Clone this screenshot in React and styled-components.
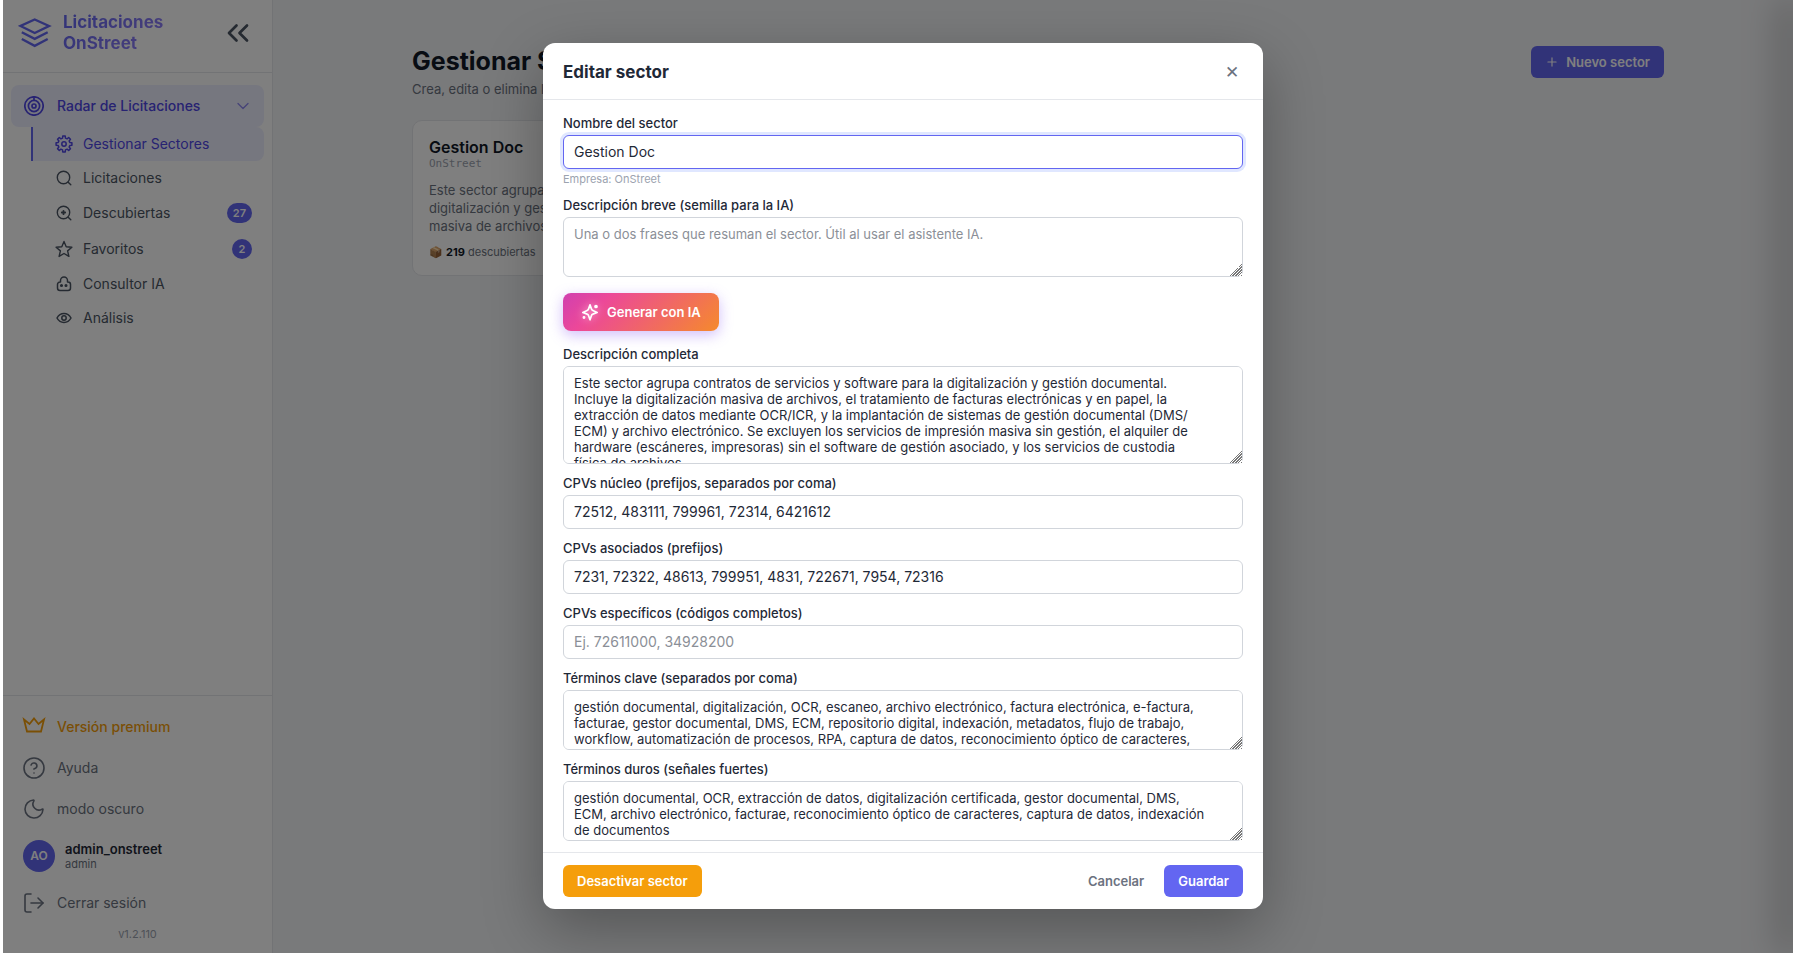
import React from "react";
import styled, { createGlobalStyle, css } from "styled-components";
import { ChevronsLeft, ChevronDown, CircleHelp, Moon, LogOut, Plus } from "lucide-react";

const GlobalStyle = createGlobalStyle`
  *, *::before, *::after { box-sizing: border-box; }
  body {
    margin: 0;
    background: #fff;
    color: #1f2937;
    font-family: Inter, "Liberation Sans", sans-serif;
    font-size: 14px;
  }
  button, input, textarea { font-family: inherit; }
  h1, h2, h3, p { margin: 0; }
  svg { flex: none; }
`;

const Viewport = styled.div`
  height: 100vh;
  padding-left: 3px;
  overflow: hidden;
`;

const Shell = styled.div`
  position: relative;
  display: flex;
  width: calc(100% + 10px);
  height: 100%;
  background: #f3f4f6;
`;

/* Sidebar */

const Sidebar = styled.aside`
  display: flex;
  flex-direction: column;
  flex: 0 0 270px;
  background: #fff;
  border-right: 1px solid #e5e7eb;
`;

const Brand = styled.header`
  display: flex;
  align-items: center;
  gap: 11px;
  height: 73px;
  padding: 0 16px 6px 15px;
  border-bottom: 1px solid #e5e7eb;
`;

const BrandName = styled.span`
  flex: 1;
  font-size: 17px;
  font-weight: 700;
  line-height: 21px;
  color: transparent;
  background: linear-gradient(135deg, #6366f1, #a78bfa);
  background-clip: text;
`;

const IconButton = styled.button`
  display: flex;
  align-items: center;
  justify-content: center;
  padding: 0;
  border: 0;
  background: none;
  color: ${(p) => p.$color || "#4b5563"};
`;

const Nav = styled.nav`
  flex: 1;
  padding: 12px 8px;
`;

const NavGroup = styled.button`
  display: flex;
  align-items: center;
  gap: 13px;
  width: 100%;
  height: 42px;
  padding: 0 11px 1px 13px;
  border: 0;
  border-radius: 8px;
  background: #edeeff;
  color: #4f46e5;
  font-size: 14px;
  font-weight: 500;
  text-align: left;
`;

const Grow = styled.span`
  flex: 1;
`;

const SubMenu = styled.ul`
  margin: 0;
  padding: 0 0 0 20px;
  list-style: none;
`;

const SubLink = styled.a`
  display: flex;
  align-items: center;
  gap: 10px;
  min-height: 34px;
  padding: 8px 12px 8px 22px;
  border-left: 2px solid transparent;
  border-radius: 0 8px 8px 0;
  color: #4b5563;
  font-size: 14px;
  line-height: 18px;
  text-decoration: none;
  ${(p) =>
    p.$active &&
    css`
      border-left-color: #6366f1;
      background: #edeeff;
      color: #4f46e5;
    `}
`;

const Badge = styled.span`
  min-width: 20px;
  padding: 0 6px;
  border-radius: 10px;
  background: #6366f1;
  color: #fff;
  font-size: 11px;
  font-weight: 600;
  line-height: 20px;
  text-align: center;
`;

const SideFooter = styled.footer`
  padding: 10px 8px;
  border-top: 1px solid #e5e7eb;
`;

const FooterButton = styled.button`
  display: flex;
  align-items: center;
  gap: 11px;
  width: 100%;
  height: 41px;
  padding: 0 11px;
  border: 0;
  background: none;
  color: ${(p) => (p.$premium ? "#f59e0b" : "#6b7280")};
  font-size: 14px;
  font-weight: ${(p) => (p.$premium ? 500 : 400)};
`;

const User = styled.div`
  display: flex;
  align-items: center;
  gap: 10px;
  height: 53px;
  padding: 0 12px;
`;

const Avatar = styled.span`
  width: 32px;
  border-radius: 50%;
  background: #6366f1;
  color: #fff;
  font-size: 12px;
  font-weight: 600;
  line-height: 32px;
  text-align: center;
`;

const UserText = styled.span`
  display: flex;
  flex-direction: column;
  color: #6b7280;
  font-size: 11px;
  line-height: 14px;
`;

const UserName = styled.strong`
  color: #1f2937;
  font-size: 13px;
  font-weight: 600;
  line-height: 16px;
`;

const Version = styled.p`
  padding-top: 2px;
  color: #9ca3af;
  font-size: 11px;
  line-height: 18px;
  text-align: center;
`;

/* Page */

const Main = styled.main`
  flex: 1;
  min-width: 0;
`;

const Container = styled.div`
  max-width: 1300px;
  margin: 0 auto;
  padding: 46px 24px;
`;

const PageHead = styled.header`
  display: flex;
  align-items: flex-start;
  justify-content: space-between;
  margin-bottom: 22px;
`;

const PageTitle = styled.h1`
  color: #111827;
  font-size: 25px;
  font-weight: 700;
  line-height: 30px;
`;

const PageText = styled.p`
  margin-top: 4px;
  color: #6b7280;
  font-size: 13px;
  line-height: 18px;
`;

const Cards = styled.div`
  display: grid;
  grid-template-columns: repeat(3, 1fr);
  gap: 16px;
`;

const Card = styled.article`
  padding: 16px;
  border: 1px solid #e5e7eb;
  border-radius: 10px;
  background: #fff;
`;

const CardTitle = styled.h2`
  color: #111827;
  font-size: 16px;
  font-weight: 600;
  line-height: 20px;
`;

const CardCompany = styled.p`
  color: #9ca3af;
  font-family: "DejaVu Sans Mono", "Liberation Mono", monospace;
  font-size: 11px;
  line-height: 14px;
`;

const CardText = styled.p`
  display: -webkit-box;
  margin: 10px 0;
  overflow: hidden;
  color: #6b7280;
  font-size: 13px;
  line-height: 18px;
  -webkit-line-clamp: 3;
  -webkit-box-orient: vertical;
`;

const CardStats = styled.p`
  color: #6b7280;
  font-size: 11px;
  line-height: 14px;

  strong { color: #111827; }
`;

const Button = styled.button`
  display: flex;
  align-items: center;
  gap: 7px;
  height: 32px;
  padding: 0 14px;
  border: 0;
  border-radius: 6px;
  background: ${(p) => p.$bg || "#6366f1"};
  color: ${(p) => p.$color || "#fff"};
  font-size: 13px;
  font-weight: 600;
  white-space: nowrap;
`;

const DrawerEdge = styled.div`
  position: absolute;
  top: 0;
  right: 0;
  bottom: 0;
  width: 10px;
  box-shadow: -8px 0 36px rgba(0, 0, 0, 0.5);
`;

/* Dialog */

const Overlay = styled.div`
  position: absolute;
  inset: 0;
  display: flex;
  align-items: flex-start;
  justify-content: center;
  padding: 43px 20px;
  background: rgba(0, 0, 0, 0.5);
`;

const Dialog = styled.section`
  width: 100%;
  max-width: 720px;
  border-radius: 12px;
  background: #fff;
  box-shadow: 0 20px 60px rgba(0, 0, 0, 0.3);
`;

const DialogHead = styled.header`
  display: flex;
  align-items: center;
  justify-content: space-between;
  height: 57px;
  padding: 2px 20px 0;
  border-bottom: 1px solid #e5e7eb;
`;

const DialogTitle = styled.h2`
  font-size: 17px;
  font-weight: 700;
`;

const CloseButton = styled(IconButton)`
  width: 22px;
  height: 22px;
  font-size: 17px;
`;

const Form = styled.form`
  display: flex;
  flex-direction: column;
  gap: 12px;
  padding: 16px 20px 11px;
`;

const Field = styled.div`
  display: flex;
  flex-direction: column;
  gap: 4px;
`;

const Label = styled.label`
  color: #1f2937;
  font-size: 13px;
  font-weight: 500;
  line-height: 15px;
`;

const control = css`
  width: 100%;
  border: 1px solid #d1d5db;
  border-radius: 6px;
  outline: 0;
  background: #fff;
  color: #1f2937;
  line-height: 16px;

  &::placeholder { color: #8b8f97; }
`;

const TextInput = styled.input`
  ${control}
  height: 34px;
  padding: 7px 10px 9px;
  font-size: 14px;

  &:focus {
    border-color: #6366f1;
    box-shadow: 0 0 0 3px #e0e7ff;
  }
`;

const TextArea = styled.textarea`
  ${control}
  display: block;
  height: ${(p) => (p.$tall ? 98 : 60)}px;
  padding: 8px 10px;
  font-size: 13px;
  resize: vertical;
  scrollbar-width: none;

  &::-webkit-resizer {
    background:
      linear-gradient(135deg, #fff 60%, transparent 60%),
      repeating-linear-gradient(135deg, #777 0 1px, #fff 1px 2px);
  }
`;

const Hint = styled.small`
  color: #9ca3af;
  font-size: 11px;
  line-height: 13px;
`;

const GenerateButton = styled.button`
  display: flex;
  align-items: center;
  align-self: flex-start;
  gap: 8px;
  height: 38px;
  margin: 4px 0;
  padding: 0 18px;
  border: 0;
  border-radius: 8px;
  background: linear-gradient(135deg, #d040b0 0%, #ec4899 25%, #f58a2c 100%);
  box-shadow: 0 4px 14px rgba(139, 92, 246, 0.4);
  color: #fff;
  font-size: 13px;
  font-weight: 600;

  svg { filter: drop-shadow(0 0 4px rgba(255, 255, 255, 0.6)); }
`;

const DialogFoot = styled.footer`
  display: flex;
  align-items: center;
  gap: 6px;
  padding: 12px 20px;
  border-top: 1px solid #e5e7eb;
`;

/* Icons */

const Icon = styled.svg.attrs((p) => ({
  width: p.$size,
  height: p.$size,
  viewBox: `0 0 ${p.$size} ${p.$size}`,
  "aria-hidden": true,
}))`
  fill: none;
  stroke: currentColor;
  stroke-width: ${(p) => p.$weight || 1.5};
`;

const LayersIcon = () => (
  <Icon $size={34} $weight={2.4} color="#6366f1">
    <path d="M16.700 3.500L31 10 16.700 17 2.500 10z" />
    <path d="M3.800 16.200l12.900 6.600 13-6.600M3.800 23l12.900 6.800L29.700 23" />
  </Icon>
);

const RadarIcon = () => (
  <Icon $size={20} $weight={1.7}>
    <circle cx="10" cy="10" r="9.200" />
    <circle cx="10" cy="10" r="5.600" />
    <circle cx="10" cy="10" r="2" />
    <path d="M10 1v3.500" />
  </Icon>
);

const GEAR = Array.from({ length: 8 }, (_, i) =>
  [[-14, 6], [-9, 8], [9, 8], [14, 6]].map(([offset, radius]) => {
    const angle = ((i * 45 + offset) * Math.PI) / 180;
    return `${(9 + radius * Math.cos(angle)).toFixed(2)},${(9 + radius * Math.sin(angle)).toFixed(2)}`;
  })
).flat().join(" ");

const GearIcon = () => (
  <Icon $size={18} strokeLinejoin="round">
    <polygon points={GEAR} />
    <circle cx="9" cy="9" r="2.200" />
  </Icon>
);

const SearchIcon = ({ plus }) => (
  <Icon $size={16} $weight={1.4} strokeLinecap="round">
    <circle cx="7.500" cy="7.500" r="6.200" />
    <path d="M12.200 12.200l2.600 2.600" />
    {plus && <path strokeWidth="1.800" d="M7.500 5.800v3.400M5.800 7.500h3.400" />}
  </Icon>
);

const StarIcon = () => (
  <Icon $size={18} $weight={1.4} strokeLinejoin="round">
    <path d="M9 1.500l2.200 5.200 5.700.5-4.300 3.700 1.300 5.500L9 13.500l-4.900 2.900 1.300-5.500L1.100 7.200l5.700-.5z" />
  </Icon>
);

const BotIcon = () => (
  <Icon $size={16} strokeLinejoin="round">
    <path d="M4.500 6V4.500a3.500 3.500 0 0 1 7 0V6h.5a2.500 2.500 0 0 1 2.500 2.500V12a2.500 2.500 0 0 1-2.500 2.500H4A2.500 2.500 0 0 1 1.500 12V8.500A2.500 2.500 0 0 1 4 6z" />
    <circle cx="5.500" cy="9.500" r="0.800" fill="currentColor" />
    <circle cx="10" cy="9.500" r="0.800" fill="currentColor" />
  </Icon>
);

const EyeIcon = () => (
  <Icon $size={16}>
    <path d="M1 8c1.600-3 4-4.500 7-4.500S13.400 5 15 8c-1.600 3-4 4.500-7 4.500S2.600 11 1 8z" />
    <circle cx="8" cy="8" r="2.200" />
  </Icon>
);

const CrownIcon = () => (
  <Icon $size={24} $weight={1.8}>
    <path d="M2 4.500L7.500 9 12 3.500 16.500 9 22 4.500 19 16.500H5z" />
  </Icon>
);

const SparkIcon = () => (
  <Icon $size={18} $weight={1.7} strokeLinejoin="round">
    <path d="M9 1.800l1.500 4.300a2 2 0 0 0 1.300 1.300L16.200 9.500l-4.400 1.600a2 2 0 0 0-1.300 1.300L9 16.800l-1.500-4.400a2 2 0 0 0-1.300-1.300L1.800 9.500l4.400-2.100a2 2 0 0 0 1.300-1.300z" />
    <circle cx="15" cy="3.500" r="1" fill="currentColor" />
    <circle cx="3" cy="14.500" r="0.600" fill="currentColor" />
  </Icon>
);

const IconSlot = styled.span`
  display: flex;
  justify-content: center;
  width: 18px;
`;

const MENU = [
  { label: "Gestionar Sectores", icon: <GearIcon />, active: true },
  { label: "Licitaciones", icon: <SearchIcon /> },
  { label: "Descubiertas", icon: <SearchIcon plus />, badge: 27 },
  { label: "Favoritos", icon: <StarIcon />, badge: 2 },
  { label: "Consultor IA", icon: <BotIcon /> },
  { label: "Análisis", icon: <EyeIcon /> },
];

const DESCRIPTION = [
  "Este sector agrupa contratos de servicios y software para la digitalización y gestión documental.",
  "Incluye la digitalización masiva de archivos, el tratamiento de facturas electrónicas y en papel, la",
  "extracción de datos mediante OCR/ICR, y la implantación de sistemas de gestión documental (DMS/",
  "ECM) y archivo electrónico. Se excluyen los servicios de impresión masiva sin gestión, el alquiler de",
  "hardware (escáneres, impresoras) sin el software de gestión asociado, y los servicios de custodia",
  "física de archivos.",
].join("\n");

const KEY_TERMS = [
  "gestión documental, digitalización, OCR, escaneo, archivo electrónico, factura electrónica, e-factura,",
  "facturae, gestor documental, DMS, ECM, repositorio digital, indexación, metadatos, flujo de trabajo,",
  "workflow, automatización de procesos, RPA, captura de datos, reconocimiento óptico de caracteres,",
].join("\n");

const HARD_TERMS = [
  "gestión documental, OCR, extracción de datos, digitalización certificada, gestor documental, DMS,",
  "ECM, archivo electrónico, facturae, reconocimiento óptico de caracteres, captura de datos, indexación",
  "de documentos",
].join("\n");

const FieldRow = ({ id, label, hint, children }) => (
  <Field>
    <Label htmlFor={id}>{label}</Label>
    {children}
    {hint && <Hint>{hint}</Hint>}
  </Field>
);

export default function App() {
  return (
    <Viewport>
      <GlobalStyle />
      <Shell>
        <Sidebar>
          <Brand>
            <LayersIcon />
            <BrandName>Licitaciones OnStreet</BrandName>
            <IconButton aria-label="Contraer menú"><ChevronsLeft size={36} strokeWidth={1.8} /></IconButton>
          </Brand>
          <Nav>
            <NavGroup>
              <RadarIcon />
              <Grow>Radar de Licitaciones</Grow>
              <ChevronDown size={20} strokeWidth={1.6} opacity={0.6} />
            </NavGroup>
            <SubMenu>
              {MENU.map((m) => (
                <li key={m.label}>
                  <SubLink href="#" $active={m.active}>
                    <IconSlot>{m.icon}</IconSlot>
                    <Grow>{m.label}</Grow>
                    {m.badge && <Badge>{m.badge}</Badge>}
                  </SubLink>
                </li>
              ))}
            </SubMenu>
          </Nav>
          <SideFooter>
            <FooterButton $premium><CrownIcon />Versión premium</FooterButton>
            <FooterButton><CircleHelp size={24} strokeWidth={1.6} />Ayuda</FooterButton>
            <FooterButton><Moon size={24} strokeWidth={1.6} />modo oscuro</FooterButton>
            <User>
              <Avatar>AO</Avatar>
              <UserText><UserName>admin_onstreet</UserName>admin</UserText>
            </User>
            <FooterButton><LogOut size={24} strokeWidth={1.6} />Cerrar sesión</FooterButton>
            <Version>v1.2.110</Version>
          </SideFooter>
        </Sidebar>

        <Main>
          <Container>
            <PageHead>
              <div>
                <PageTitle>Gestionar Sectores</PageTitle>
                <PageText>Crea, edita o elimina los sectores de tu empresa.</PageText>
              </div>
              <Button><Plus size={14} />Nuevo sector</Button>
            </PageHead>
            <Cards>
              <Card>
                <CardTitle>Gestion Doc</CardTitle>
                <CardCompany>OnStreet</CardCompany>
                <CardText>{DESCRIPTION}</CardText>
                <CardStats>📦 <strong>219</strong> descubiertas</CardStats>
              </Card>
            </Cards>
          </Container>
        </Main>
        <DrawerEdge />

        <Overlay>
          <Dialog role="dialog" aria-modal="true" aria-labelledby="dialog-title">
            <DialogHead>
              <DialogTitle id="dialog-title">Editar sector</DialogTitle>
              <CloseButton $color="#6b7280" aria-label="Cerrar">✕</CloseButton>
            </DialogHead>
            <Form id="sector-form">
              <FieldRow id="nombre" label="Nombre del sector" hint="Empresa: OnStreet">
                <TextInput id="nombre" defaultValue="Gestion Doc" autoFocus />
              </FieldRow>
              <FieldRow id="breve" label="Descripción breve (semilla para la IA)">
                <TextArea id="breve" placeholder="Una o dos frases que resuman el sector. Útil al usar el asistente IA." />
              </FieldRow>
              <GenerateButton type="button"><SparkIcon />Generar con IA</GenerateButton>
              <FieldRow id="completa" label="Descripción completa">
                <TextArea id="completa" $tall defaultValue={DESCRIPTION} />
              </FieldRow>
              <FieldRow id="nucleo" label="CPVs núcleo (prefijos, separados por coma)">
                <TextInput id="nucleo" defaultValue="72512, 483111, 799961, 72314, 6421612" />
              </FieldRow>
              <FieldRow id="asociados" label="CPVs asociados (prefijos)">
                <TextInput id="asociados" defaultValue="7231, 72322, 48613, 799951, 4831, 722671, 7954, 72316" />
              </FieldRow>
              <FieldRow id="especificos" label="CPVs específicos (códigos completos)">
                <TextInput id="especificos" placeholder="Ej. 72611000, 34928200" />
              </FieldRow>
              <FieldRow id="clave" label="Términos clave (separados por coma)">
                <TextArea id="clave" defaultValue={KEY_TERMS} />
              </FieldRow>
              <FieldRow id="duros" label="Términos duros (señales fuertes)">
                <TextArea id="duros" defaultValue={HARD_TERMS} />
              </FieldRow>
            </Form>
            <DialogFoot>
              <Button type="button" $bg="#f59e0b">Desactivar sector</Button>
              <Grow />
              <Button type="button" $bg="transparent" $color="#6b7280">Cancelar</Button>
              <Button form="sector-form">Guardar</Button>
            </DialogFoot>
          </Dialog>
        </Overlay>
      </Shell>
    </Viewport>
  );
}
